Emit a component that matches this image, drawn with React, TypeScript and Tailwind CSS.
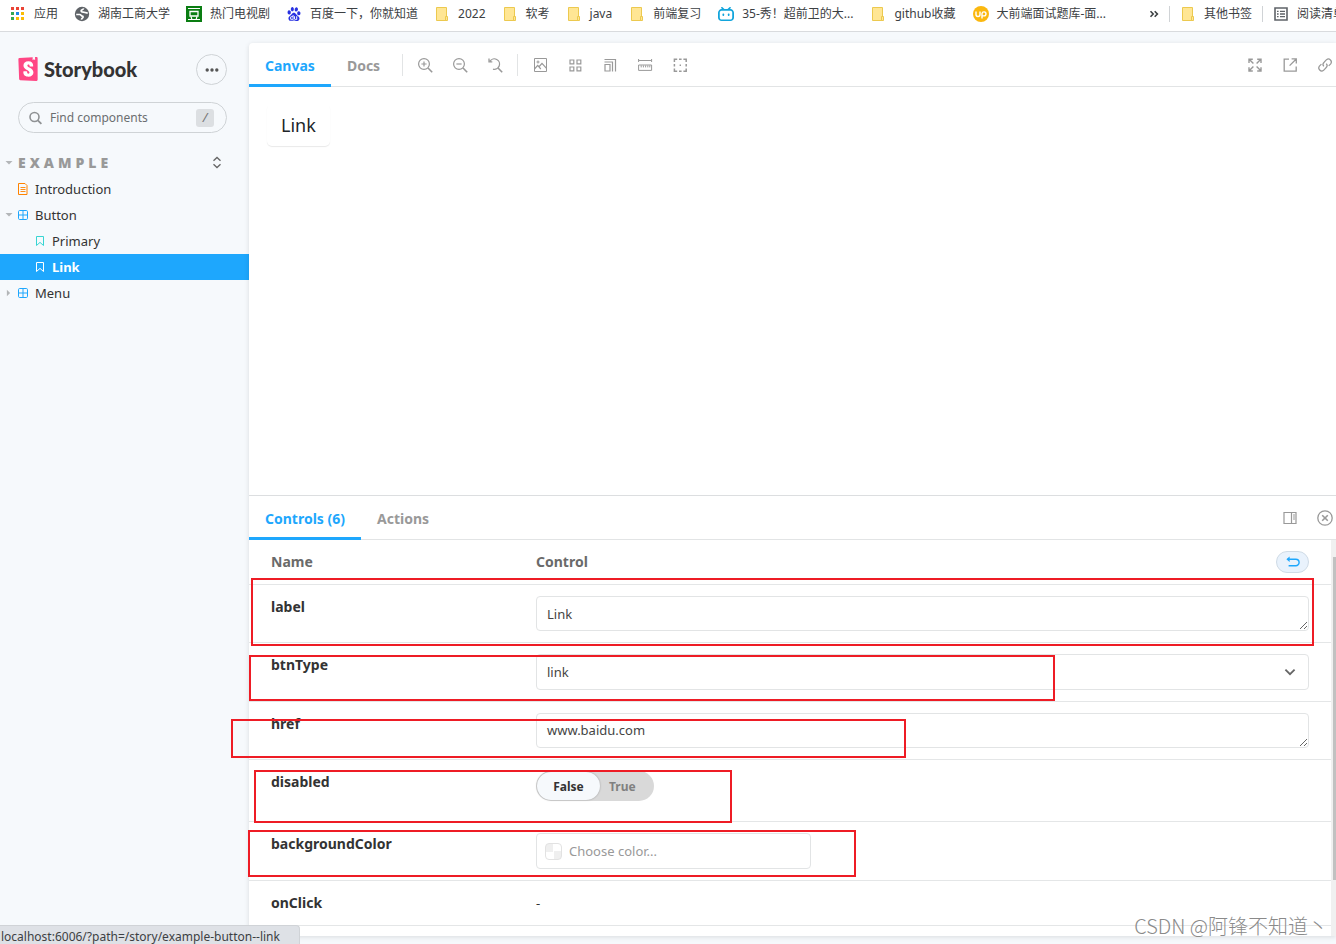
import type { ReactNode } from "react";
import { SiBaidu, SiBilibili, SiStorybook } from "react-icons/si";

const FONT = "font-['Noto_Sans','Noto_Sans_CJK_SC',sans-serif]";

function Svg({ children, className = "" }: { children: ReactNode; className?: string }) {
  return (
    <svg
      viewBox="0 0 14 14"
      className={`size-[14px] shrink-0 overflow-visible ${className}`}
      fill="none"
      stroke="currentColor"
      strokeWidth="1"
      aria-hidden="true"
    >
      {children}
    </svg>
  );
}

function FolderIcon() {
  return (
    <svg viewBox="0 0 16 16" className="size-4 shrink-0" aria-hidden="true">
      <path d="M2.5 1.5h10v13h-10z" fill="#ffe694" stroke="#ecc94f" />
      <path d="M11.5 10.5h2v4h-2z" fill="#ffe694" stroke="#ecc94f" />
    </svg>
  );
}

function AppsIcon() {
  const colors = ["#ea4335", "#ea4335", "#ea4335", "#34a853", "#1e88e5", "#fbbc04", "#34a853", "#fbbc04", "#fbbc04"];
  return (
    <svg viewBox="0 0 16 16" className="size-4 shrink-0" aria-hidden="true">
      {colors.map((color, i) => (
        <rect key={i} x={1 + (i % 3) * 5} y={1 + Math.floor(i / 3) * 5} width="3" height="3" fill={color} />
      ))}
    </svg>
  );
}

function GlobeIcon() {
  return (
    <svg viewBox="0 0 16 16" className="size-4 shrink-0" aria-hidden="true">
      <circle cx="8" cy="8" r="7.2" fill="#5f6368" />
      <path d="M9.6 2.4c-.4 1.6-2 1-2.4 2.2-.3 1 .8 1.4 2 1.5 1.6.1 2.7.9 4.6.9" fill="none" stroke="#fff" strokeWidth="1.7" />
      <path d="M2.2 8.5h3.4c1.7 0 1.5 1.5 2.7 1.7 1.2.2.9 1.3.1 1.8-.7.4-.9.9-1 1.7" fill="none" stroke="#fff" strokeWidth="1.7" />
    </svg>
  );
}

function DoubanIcon() {
  return (
    <svg viewBox="0 0 16 16" className="size-4 shrink-0" aria-hidden="true">
      <rect width="16" height="16" fill="#0a7d12" />
      <path d="M2 2.5h12M2 13.500h12M5 10.500l.8 2.500M11 10.500l-.8 2.500" stroke="#fff" strokeWidth="1.2" />
      <path d="M4 5.500h8v4.500H4z" fill="none" stroke="#fff" strokeWidth="1.3" />
    </svg>
  );
}

function UpIcon() {
  return (
    <svg viewBox="0 0 16 16" className="size-4 shrink-0" aria-hidden="true">
      <circle cx="8" cy="8" r="8" fill="#fbb80f" />
      <path d="M3 5.5v3a2 2 0 0 0 4 0v-3M9 12.5V7.6a2 2 0 1 1 2 2.3H9" fill="none" stroke="#fff" strokeWidth="1.4" />
    </svg>
  );
}

function ListIcon() {
  return (
    <svg viewBox="0 0 16 16" className="size-4 shrink-0" fill="none" stroke="#5f6368" aria-hidden="true">
      <path d="M2 2h12v12H2z" strokeWidth="1.6" />
      <path d="M4 5.3h1.6M7 5.3h5M4 8h1.6M7 8h5M4 10.7h1.6M7 10.7h5" strokeWidth="1.3" />
    </svg>
  );
}

function Bookmark({ icon, children }: { icon: ReactNode; children: ReactNode }) {
  return (
    <a href="#" className="flex shrink-0 items-center gap-2 whitespace-nowrap">
      {icon}
      {children}
    </a>
  );
}

function BookmarksBar() {
  return (
    <nav className="flex h-8 items-center justify-between overflow-hidden border-b border-[#d9dbde] bg-white pb-1 pl-[10px] text-xs text-[#3c4043]">
      <div className="flex items-center gap-4">
        <Bookmark icon={<AppsIcon />}>应用</Bookmark>
        <Bookmark icon={<GlobeIcon />}>湖南工商大学</Bookmark>
        <Bookmark icon={<DoubanIcon />}>热门电视剧</Bookmark>
        <Bookmark icon={<SiBaidu className="size-4 p-px text-[#2932e1]" />}>百度一下，你就知道</Bookmark>
        <Bookmark icon={<FolderIcon />}>2022</Bookmark>
        <Bookmark icon={<FolderIcon />}>软考</Bookmark>
        <div className="flex items-center gap-[17px]">
          <Bookmark icon={<FolderIcon />}>java</Bookmark>
          <Bookmark icon={<FolderIcon />}>前端复习</Bookmark>
          <Bookmark icon={<SiBilibili className="size-4 text-[#12a5dc]" />}>35-秀！超前卫的大...</Bookmark>
          <Bookmark icon={<FolderIcon />}>github收藏</Bookmark>
          <Bookmark icon={<UpIcon />}>大前端面试题库-面...</Bookmark>
        </div>
      </div>
      <div className="-mr-[9px] flex shrink-0 items-center gap-[10px]">
        <button aria-label="More bookmarks" className="text-[#3c4043]">
          <svg viewBox="0 0 10 8" className="h-2 w-[10px]" fill="none" stroke="currentColor" strokeWidth="1.6" aria-hidden="true">
            <path d="M1.5 1.200 4.200 4 1.500 6.800M5.700 1.200 8.400 4 5.700 6.800" />
          </svg>
        </button>
        <span className="h-4 w-px bg-[#d0d3d6]" />
        <Bookmark icon={<FolderIcon />}>其他书签</Bookmark>
        <span className="h-4 w-px bg-[#d0d3d6]" />
        <Bookmark icon={<ListIcon />}>阅读清单</Bookmark>
      </div>
    </nav>
  );
}

function Caret({ open }: { open?: boolean }) {
  return (
    <svg viewBox="0 0 8 8" className="size-2 shrink-0" fill="#b3b6b8" aria-hidden="true">
      <path d={open ? "M.5 2h7L4 5.6z" : "M1.9.8v6.4L5.1 4z"} />
    </svg>
  );
}

function ComponentIcon() {
  return (
    <svg viewBox="0 0 10 10" className="size-[10px] shrink-0 text-[#1ea7fd]" fill="none" stroke="currentColor" aria-hidden="true">
      <rect x=".5" y=".5" width="9" height="9" rx="1.2" />
      <path d="M5 .5v9M.5 5h9" />
    </svg>
  );
}

function StoryIcon({ className }: { className: string }) {
  return (
    <svg viewBox="0 0 10 10" className={`size-[10px] shrink-0 ${className}`} fill="none" stroke="currentColor" aria-hidden="true">
      <path d="M1.5.5h7v9L5 6.4 1.5 9.5z" />
    </svg>
  );
}

function DocIcon() {
  return (
    <svg viewBox="0 0 10 12" className="h-3 w-[10px] shrink-0 text-[#ff8300]" fill="none" stroke="currentColor" aria-hidden="true">
      <path d="M.5.5h6.500l2 2v9H.5z" />
      <path d="M2.500 4.500h5M2.500 6.500h5M2.500 8.500h5" strokeWidth=".9" />
    </svg>
  );
}

function Sidebar() {
  return (
    <aside className="w-[249px] shrink-0 pt-[22px] text-[#333]">
      <div className="flex items-start justify-between pl-4 pr-[22px]">
        <a href="#" className="flex h-[30px] items-center gap-1">
          <SiStorybook className="size-6 bg-[linear-gradient(white,white)] bg-[length:12px_18px] bg-center bg-no-repeat text-[#ff4785]" />
          <span className="pb-px font-['Lato',sans-serif] text-xl leading-7 font-black">Storybook</span>
        </a>
        <button aria-label="Shortcuts" className="flex size-[31px] items-center justify-center rounded-full border border-[#cfd3d6]">
          <Svg className="text-[#555]">
            <path d="M2.2 7h.01M7 7h.01M11.8 7h.01" strokeWidth="3.4" strokeLinecap="round" />
          </Svg>
        </button>
      </div>
      <label className="ml-[18px] mr-[22px] mt-[17px] flex h-[31px] items-center rounded-full border border-[#cfd3d6] pl-[10px] pr-3">
        <Svg className="text-[#8f9294]">
          <circle cx="5.5" cy="6" r="4.5" strokeWidth="1.6" />
          <path d="m8.8 9.3 3.6 3.6" strokeWidth="1.8" />
        </Svg>
        <input
          aria-label="Find components"
          placeholder="Find components"
          className="ml-[7px] min-w-0 flex-1 bg-transparent text-xs outline-none placeholder:text-[#6b6e70]"
        />
        <kbd className={`flex h-[18px] w-[18px] items-center justify-center rounded-[3px] bg-[#dcdfe2] text-[13px] italic text-[#777] ${FONT}`}>/</kbd>
      </label>

      <div className="mt-[17px] flex h-[26px] items-center justify-between pr-[27px]">
        <button className="flex items-center gap-[5px] pl-[5px] text-sm font-black tracking-[4px] text-[#999]">
          <Caret open />
          EXAMPLE
        </button>
        <button aria-label="Expand all" className="text-[#666]">
          <svg viewBox="0 0 10 14" className="h-[14px] w-[10px]" fill="none" stroke="currentColor" strokeWidth="1.3" aria-hidden="true">
            <path d="M1.5 4.8 5 1.5l3.5 3.3M1.5 8.2 5 11.5l3.5-3.3" />
          </svg>
        </button>
      </div>
      <nav className="flex flex-col text-[13px] leading-[26px]">
        <a href="#" className="flex items-center gap-[7px] pl-[18px]">
          <DocIcon />
          Introduction
        </a>
        <a href="#" className="flex items-center gap-[5px] pl-[5px]">
          <Caret open />
          <span className="flex items-center gap-[7px]">
            <ComponentIcon />
            Button
          </span>
        </a>
        <a href="#" className="flex items-center gap-[7px] pl-[35px]">
          <StoryIcon className="text-[#37d5d3]" />
          Primary
        </a>
        <a href="#" className="flex items-center gap-[7px] bg-[#1ea7fd] pl-[35px] font-bold text-white">
          <StoryIcon className="text-white" />
          Link
        </a>
        <a href="#" className="flex items-center gap-[5px] pl-[5px]">
          <Caret />
          <span className="flex items-center gap-[7px]">
            <ComponentIcon />
            Menu
          </span>
        </a>
      </nav>
    </aside>
  );
}

function Tab({ active, children }: { active?: boolean; children: ReactNode }) {
  return (
    <button
      role="tab"
      aria-selected={!!active}
      className={`-mb-px h-11 border-b-3 px-4 pt-1 text-sm font-bold ${
        active ? "border-[#1ea7fd] text-[#1ea7fd]" : "border-transparent text-[#999]"
      }`}
    >
      {children}
    </button>
  );
}

function IconButton({ label, children }: { label: string; children: ReactNode }) {
  return (
    <button aria-label={label} className="text-[#999]">
      <Svg>{children}</Svg>
    </button>
  );
}

function Toolbar() {
  return (
    <div className="flex h-11 items-center justify-between border-b border-[#e2e4e5] pr-1">
      <div className="flex items-center">
        <Tab active>Canvas</Tab>
        <Tab>Docs</Tab>
        <span className="ml-[6px] h-[22px] w-px bg-[#e2e4e5]" />
        <div className="flex gap-[21px] px-[15px]">
          <IconButton label="Zoom in">
            <circle cx="6" cy="6" r="5.4" strokeWidth="1.2" />
            <path d="M3.4 6h5.2M6 3.4v5.2" strokeWidth="1.2" />
            <path d="m10 10 4.2 4.2" strokeWidth="1.6" />
          </IconButton>
          <IconButton label="Zoom out">
            <circle cx="6" cy="6" r="5.4" strokeWidth="1.2" />
            <path d="M3.4 6h5.2" strokeWidth="1.2" />
            <path d="m10 10 4.2 4.2" strokeWidth="1.6" />
          </IconButton>
          <IconButton label="Reset zoom">
            <path d="M2 3.200A5.200 5.200 0 1 1 5 11.100M1 .5v3.300h3.300" strokeWidth="1.300" />
            <path d="m10 10 4.2 4.2" strokeWidth="1.6" />
          </IconButton>
        </div>
        <span className="h-[22px] w-px bg-[#e2e4e5]" />
        <div className="flex gap-[21px] pl-[15px]">
          <IconButton label="Change background">
            <path d="M1.5.5h12v13h-12z" />
            <path d="m1.5 11 3.2-3.6L7.8 11M5.8 9 9 5.4l4.5 5" strokeWidth="1.2" />
            <circle cx="5" cy="4" r="1" />
          </IconButton>
          <IconButton label="Apply a grid">
            <path d="M2 2h3.800v3.800H2zM9 2h3.800v3.800H9zM2 9h3.800v3.800H2zM9 9h3.800v3.800H9z" strokeWidth="1.2" />
          </IconButton>
          <IconButton label="Change viewport">
            <path d="M2 6.500h5v6.500H2z" strokeWidth="1.2" />
            <path d="M1.500 4h8v9.500M1.500 1.500H12.500v12" strokeWidth="1.2" />
          </IconButton>
          <IconButton label="Measure">
            <path d="M.6 1v3M13.6 1v3M1 2.5h12.4" />
            <path d="M.6 7h13v5.4H.6zM3.2 7.4v2M5.4 7.4v2M7.6 7.4v2M9.8 7.4v2M11.8 7.4v2" />
          </IconButton>
          <IconButton label="Outline">
            <path d="M1.4 4V1.2h2.8M10.4 1.2h2.8V4M13.2 10.4v2.8h-2.8M4.2 13.2H1.4v-2.8M6 1.2h2.6M6 13.2h2.6M1.4 6v2.6M13.2 6v2.6M6.6 7.2h1.4" strokeWidth="1.5" />
          </IconButton>
        </div>
      </div>
      <div className="flex gap-[21px]">
        <IconButton label="Go full screen">
          <path d="M1 5V1.2h3.8M9.2 1.2H13V5M13 9.2V13H9.2M4.8 13H1V9.2M1.4 1.6l4 4M12.6 1.6l-4 4M12.6 12.6l-4-4M1.4 12.6l4-4" strokeWidth="1.4" />
        </IconButton>
        <IconButton label="Open canvas in new tab">
          <path d="M6 1.2H1.2v12h12V8.6M8.6.9h4.7v4.7M13 1.2 6.6 7.6" strokeWidth="1.3" />
        </IconButton>
        <IconButton label="Copy canvas link">
          <path d="M5.8 8.4a3 3 0 0 1 .3-4.2l2.4-2.5a3 3 0 0 1 4.2 4.2l-2 2M8.3 5.6a3 3 0 0 1-.3 4.2l-2.4 2.5a3 3 0 0 1-4.2-4.2l2-2" strokeWidth="1.2" />
        </IconButton>
      </div>
    </div>
  );
}

function Row({ name, htmlFor, tall, children }: { name: string; htmlFor?: string; tall?: boolean; children: ReactNode }) {
  return (
    <tr className={tall ? "h-[62px]" : ""}>
      <th scope="row" className="border-b border-[#e4e6e7] py-[11px] pl-[22px] text-left align-top text-sm font-bold leading-[22px]">
        <label htmlFor={htmlFor}>{name}</label>
      </th>
      <td className="border-b border-[#e4e6e7] py-[11px] pl-[15px] pr-[22px] align-top leading-[22px]">{children}</td>
    </tr>
  );
}

function ControlsTable() {
  return (
    <table className="w-full table-fixed border-separate border-spacing-0 text-[13px] text-[#333]">
      <colgroup>
        <col className="w-[272px]" />
        <col />
      </colgroup>
      <thead>
        <tr className="text-left text-sm leading-[22px] text-[#6a6a6a]">
          <th className="border-b border-[#e4e6e7] py-[11px] pl-[22px] font-bold">Name</th>
          <th className="border-b border-[#e4e6e7] py-[11px] pl-[15px] pr-[22px] font-bold">
            <div className="flex justify-between">
              Control
              <button aria-label="Reset controls" className="flex h-[22px] w-[33px] items-center justify-center rounded-full border border-[#cfdbe6] bg-[#e9f2fc] text-[#1ea7fd]">
                <Svg>
                  <path d="M1.4 4.2h8.400a2.900 2.900 0 0 1 0 6.600H2.600" strokeWidth="1.4" />
                  <path d="M3.6 1.4.4 4.2l3.2 2.7z" fill="currentColor" stroke="none" />
                </Svg>
              </button>
            </div>
          </th>
        </tr>
      </thead>
      <tbody>
        <Row name="label" htmlFor="label">
          <textarea id="label" defaultValue="Link" rows={1} className="block h-[35px] w-full resize-y overflow-hidden rounded-[4px] border border-[#e2e4e5] px-[10px] py-[6px] leading-[22px] text-[#444] outline-none" />
        </Row>
        <Row name="btnType" htmlFor="btnType">
          <div className="relative">
            <select id="btnType" defaultValue="link" className="block h-9 w-full appearance-none rounded-[4px] border border-[#e2e4e5] bg-white px-[10px] text-[#444] outline-none">
              <option>link</option>
            </select>
            <Svg className="pointer-events-none absolute right-3 top-[11px] text-[#666]">
              <path d="m2.4 4.6 4.6 4.6 4.6-4.6" strokeWidth="1.8" />
            </Svg>
          </div>
        </Row>
        <Row name="href" htmlFor="href">
          <textarea id="href" defaultValue="www.baidu.com" rows={1} className="block h-[35px] w-full resize-y overflow-hidden rounded-[4px] border border-[#e2e4e5] px-[10px] py-[5px] leading-[22px] text-[#444] outline-none" />
        </Row>
        <Row name="disabled" htmlFor="disabled" tall>
          <label className="relative flex h-[30px] w-[118px] rounded-full bg-[#d9d9d9] p-px text-xs font-bold leading-[30px]">
            <input id="disabled" type="checkbox" className="sr-only" />
            <span className="w-[63px] rounded-full bg-[#f6f9fc] text-center text-[#333] shadow-[0_0_2px_rgba(0,0,0,0.3)]">False</span>
            <span className="pl-[9px] text-[#808080]">True</span>
          </label>
        </Row>
        <Row name="backgroundColor" htmlFor="backgroundColor">
          <div className="flex h-9 w-[275px] items-center gap-[7px] rounded-[4px] border border-[#e2e4e5] pl-2">
            <span className="size-[17px] shrink-0 rounded-[4px] border border-[#e2e2e2] bg-[conic-gradient(#fff_25%,#efefef_0_50%,#fff_0_75%,#efefef_0)]" />
            <input id="backgroundColor" placeholder="Choose color..." className="min-w-0 flex-1 bg-transparent outline-none placeholder:text-[#999]" />
          </div>
        </Row>
        <Row name="onClick">-</Row>
      </tbody>
    </table>
  );
}

function Annotations() {
  const box = "pointer-events-none absolute border-2 border-[#ee1c25]";
  return (
    <div aria-hidden="true">
      <div className={`${box} left-[2px] top-[82px] h-[68px] w-[1063px]`} />
      <div className={`${box} left-0 top-[159px] h-[46px] w-[806px]`} />
      <div className={`${box} -left-[18px] top-[223px] h-[39px] w-[675px]`} />
      <div className={`${box} left-[5px] top-[274px] h-[53px] w-[478px]`} />
      <div className={`${box} -left-px top-[334px] h-[47px] w-[608px]`} />
    </div>
  );
}

function AddonsPanel() {
  return (
    <section className="relative border-t border-[#dcdee0]">
      <div className="flex h-11 items-center justify-between border-b border-[#e2e4e5] pr-1">
        <div className="flex" role="tablist">
          <Tab active>Controls (6)</Tab>
          <Tab>Actions</Tab>
        </div>
        <div className="flex gap-[21px]">
          <IconButton label="Change addon orientation">
            <path d="M1 1.500h12v11H1zM8.500 1.500v11" strokeWidth="1.2" />
            <path d="M10 4h2M10 6h2M10 8h2" />
          </IconButton>
          <IconButton label="Hide addons">
            <circle cx="7" cy="7" r="7.2" strokeWidth="1.3" />
            <path d="m4.2 4.2 5.6 5.6M9.8 4.2 4.2 9.8" strokeWidth="1.6" />
          </IconButton>
        </div>
      </div>
      <div className="flex">
        <div className="min-w-0 flex-1 pb-[10px]">
          <ControlsTable />
        </div>
        <div className="w-[5px] bg-[#f0f0f0] pb-14 pl-[2px] pt-[17px]">
          <div className="h-full bg-[#c1c1c1]" />
        </div>
      </div>
      <Annotations />
    </section>
  );
}

export default function App() {
  return (
    <div className={`relative flex min-h-screen flex-col overflow-hidden bg-[#f6f9fc] ${FONT}`}>
      <BookmarksBar />
      <div className="flex flex-1">
        <Sidebar />
        <main className="mb-2 mt-[11px] flex min-w-0 flex-1 flex-col rounded-tl-[4px] bg-white shadow-[0_1px_5px_rgba(0,0,0,0.12)]">
          <Toolbar />
          <div className="flex-1 px-[18px] py-[17px]">
            <a href="#" className="inline-block rounded-[5px] px-[14px] py-[7px] text-lg leading-7 text-[#212529] shadow-[0_1px_1px_rgba(0,0,0,0.09)]">
              Link
            </a>
          </div>
          <AddonsPanel />
        </main>
      </div>
      <div className="absolute bottom-0 left-0 h-[19px] w-[300px] whitespace-nowrap rounded-tr-[4px] border-r border-t border-[#d0d3d7] bg-[#dee1e6] pl-px pt-px text-xs leading-5 text-[#3c4043]">
        localhost:6006/?path=/story/example-button--link
      </div>
      <div className="pointer-events-none absolute bottom-1 right-2 whitespace-nowrap font-['Noto_Sans_CJK_SC',sans-serif] text-xl leading-7 font-light text-[#8a8a8a]">
        CSDN @阿锋不知道丶
      </div>
    </div>
  );
}
